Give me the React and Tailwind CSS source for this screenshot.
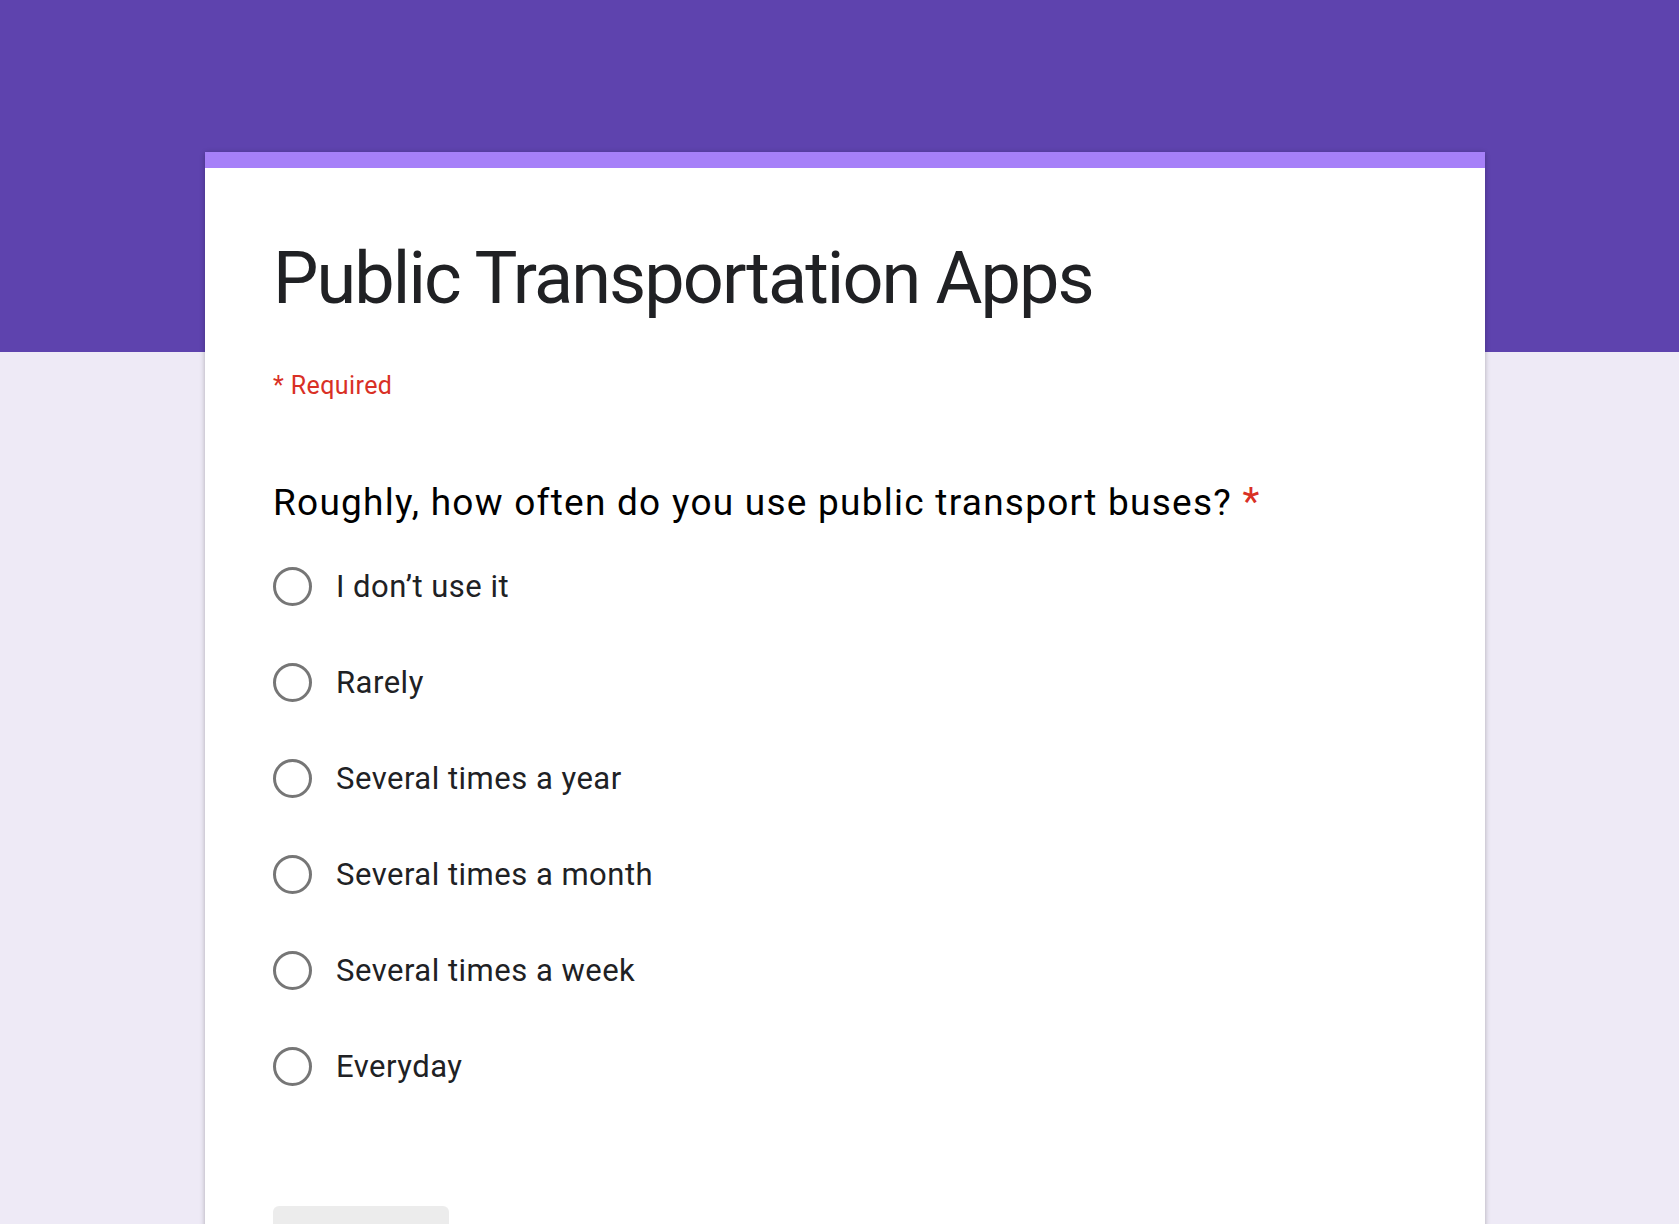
import React from "react";

const options = [
  "I don\u2019t use it",
  "Rarely",
  "Several times a year",
  "Several times a month",
  "Several times a week",
  "Everyday",
];

export default function App() {
  return (
    <div
      className="relative h-[1224px] w-full overflow-hidden bg-[#eeeaf6]"
      style={{ fontFamily: "Roboto, 'Noto Sans', Arial, sans-serif" }}
    >
      <div className="h-[352px] w-full bg-[#5e43ae]" />
      <div className="relative -mt-[200px] ml-[205px] w-[1280px] bg-white shadow-[0_1px_5px_0_rgba(0,0,0,0.28)]">
        <div className="h-4 w-full bg-[#a680f8]" />
        <div className="pl-[68px] pt-[75px] pb-20">
          <h1 className="text-[72px] leading-[72px] font-normal tracking-[-1.9px] text-[#202124]">
            Public Transportation Apps
          </h1>
          <div className="mt-[58px] text-[25px] leading-[25px] tracking-[0.4px] text-[#d93025]">
            * Required
          </div>
          <div className="mt-[86px] h-[36px] text-[37px] leading-[36px] tracking-[1.25px] text-[#000000]">
            Roughly, how often do you use public transport buses?{" "}
            <span className="text-[39px] leading-[36px] text-[#d93025]">*</span>
          </div>
          <div className="mt-[18px] flex flex-col">
            {options.map((o) => (
              <div key={o} className="flex h-[96px] items-center">
                <div className="h-[39px] w-[39px] shrink-0 rounded-full border-[3px] border-[#767676]" />
                <span className="ml-[24px] text-[31px] leading-[31px] tracking-[0.5px] text-[#202124]">
                  {o}
                </span>
              </div>
            ))}
          </div>
          <div className="mt-[92px] h-[64px] w-[176px] rounded-[6px] bg-[#ececec]" />
        </div>
      </div>
    </div>
  );
}
